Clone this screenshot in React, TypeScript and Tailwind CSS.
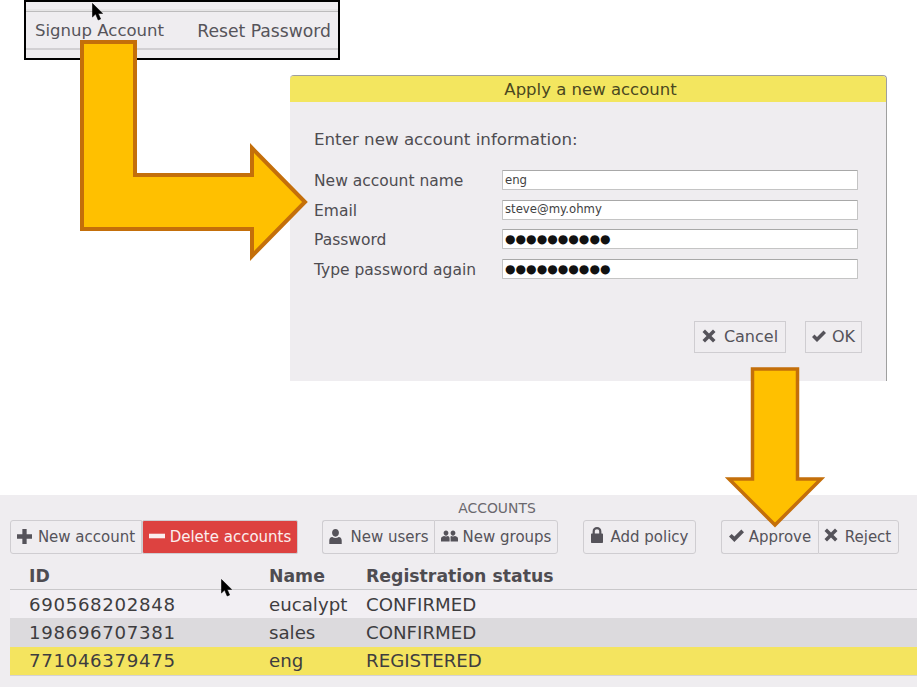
import type { ReactNode } from "react";

const font = "font-['DejaVu_Sans',sans-serif]";

function Cursor({ className }: { className: string }) {
  return (
    <svg viewBox="0 0 12 20" className={`absolute h-[20px] w-[12px] ${className}`}>
      <path d="M0.5 0.5 L0.5 14 L3.6 11 L6.2 17 L8.6 16 L6.2 10.4 L10.6 10.4 Z" fill="#000" stroke="#000" strokeWidth="0.6" />
    </svg>
  );
}

function Icon({ d, className, box = "0 0 14 14" }: { d: string; className: string; box?: string }) {
  return (
    <svg viewBox={box} className={`shrink-0 fill-current ${className}`}>
      <path d={d} />
    </svg>
  );
}

const plus = "M5 0h4v5h5v4H9v5H5V9H0V5h5z";
const minus = "M0 5h14v4H0z";
const cross = "M3 .5 7 4.5 11 .5 13.5 3 9.5 7 13.5 11 11 13.5 7 9.5 3 13.5 .5 11 4.5 7 .5 3z";
const check = "M5 13 0 8 2.5 5.5 5 8 11.5 1.5 14 4z";
const user = "M7 0C8.9 0 10.2 1.6 10.2 3.6S8.9 7.2 7 7.2 3.8 5.6 3.8 3.6 5.1 0 7 0zM4 7.4C5 8 6 8.3 7 8.3S9 8 10 7.4C11.8 7.6 12.8 8.8 12.8 10.8V14H1.2V10.8C1.2 8.8 2.2 7.6 4 7.4z";
const users = "M5 0C6.4 0 7.4 1.1 7.4 2.6S6.4 5.2 5 5.2 2.6 4.1 2.6 2.6 3.6 0 5 0zM12 0C13.4 0 14.4 1.1 14.4 2.6S13.4 5.2 12 5.2 9.6 4.1 9.6 2.6 10.6 0 12 0zM3 5.6C4.2 6.2 5.8 6.2 7 5.6 8.2 6 8.6 7 8.6 8.2V11H0V8.2C0 7 1 6 3 5.6zM10 5.6C11.2 6.2 12.8 6.2 14 5.6 16 6 17 7 17 8.2V11H9.6V8.2C9.6 7 9.2 6 10 5.6z";
const lock = "M6 0C8.6 0 10.4 1.8 10.4 4.4V6.6H11C11.6 6.6 12 7 12 7.6V15C12 15.6 11.6 16 11 16H1C.4 16 0 15.6 0 15V7.6C0 7 .4 6.6 1 6.6H1.6V4.4C1.6 1.8 3.4 0 6 0zM6 2.2C4.6 2.2 3.8 3 3.8 4.4V6.6H8.2V4.4C8.2 3 7.4 2.2 6 2.2z";

function ToolButton({ icon, label, className = "" }: { icon: ReactNode; label: string; className?: string }) {
  return (
    <div className={`flex items-center justify-center border border-[#cfcdd1] text-[#55535a] ${className}`}>
      {icon}
      <span>{label}</span>
    </div>
  );
}

function Field({ label, value, dots }: { label: string; value?: string; dots?: boolean }) {
  return (
    <>
      <div className="h-[20px] text-[15.5px] leading-[22px] text-[#4e4c51]">{label}</div>
      <div className="flex h-[20px] items-center rounded-[1px] border border-[#c4c4c4] border-t-[#a8a8a8] bg-white pl-[2px] pt-[1px] text-[11.7px] text-[#3f3f42]">
        {dots ? <span className="text-[12.1px] leading-none text-[#111]">●●●●●●●●●●</span> : value}
      </div>
    </>
  );
}

const rows = [
  { id: "690568202848", name: "eucalypt", status: "CONFIRMED", bg: "bg-[#f2eff3]" },
  { id: "198696707381", name: "sales", status: "CONFIRMED", bg: "bg-[#dcdadd]" },
  { id: "771046379475", name: "eng", status: "REGISTERED", bg: "bg-[#f4e45f]" },
];

export default function App() {
  return (
    <div className={`relative h-[687px] w-[917px] overflow-hidden bg-white ${font}`}>
      {/* signup menu crop */}
      <div className="ml-[24px] mt-0 flex h-[60px] w-[316px] flex-col border-2 border-black bg-[#efedf0]">
        <div className="mt-[7px] h-[3px] border-b border-[#bdbcbd] bg-[#e6e5e6]" />
        <div className="flex h-[36px] items-center justify-between pl-[9px] pr-[7px] pt-[3px] text-[#56545a]">
          <span className="text-[16.55px]">Signup Account</span>
          <span className="text-[17.2px]">Reset Password</span>
        </div>
        <div className="h-[2px] bg-[#d2d0d3]" />
      </div>

      {/* dialog */}
      <div className="ml-[290px] mt-[15px] h-[306px] w-[597px] rounded-t-[4px] border-r border-t border-[#9f9f9f] bg-[#efedf0]">
        <div className="flex h-[26px] items-center justify-center rounded-t-[4px] bg-[#f3e65f] pl-[5px] pt-[2px] text-[16.5px] text-[#4a4820]">
          Apply a new account
        </div>
        <div className="pl-[24px] pt-[27px] text-[16.7px] leading-[20px] text-[#4e4c51]">Enter new account information:</div>
        <div className="ml-[24px] mt-[21px] grid w-[544px] grid-cols-[188px_356px] gap-y-[9.5px]">
          <Field label="New account name" value="eng" />
          <Field label="Email" value="steve@my.ohmy" />
          <Field label="Password" dots />
          <Field label="Type password again" dots />
        </div>
        <div className="ml-[404px] mt-[42px] flex gap-[19px] text-[16px]">
          <ToolButton className="h-[32px] w-[92px] gap-[8px]" icon={<Icon d={cross} className="-mt-[2px] size-[14px]" />} label="Cancel" />
          <ToolButton className="h-[32px] w-[57px] gap-[6px]" icon={<Icon d={check} className="-mt-[2px] size-[14px]" />} label="OK" />
        </div>
      </div>

      {/* accounts panel */}
      <div className="mt-[114px] h-[192px] bg-[#efedf0]">
        <div className="pl-[77px] pt-[6px] text-center text-[13.9px] leading-[15px] text-[#6a686d]">ACCOUNTS</div>
        <div className="ml-[10px] mt-[4px] flex text-[15px]">
          <div className="flex h-[34px]">
            <ToolButton className="w-[132px] gap-[6px] rounded-l-[3px]" icon={<Icon d={plus} className="-mt-[2px] size-[15px]" />} label="New account" />
            <ToolButton className="w-[156px] gap-[5px] rounded-[2px] border-[#c9302c] bg-[#dd4240] text-[#fbeeee]" icon={<Icon d={minus} className="-mt-[2px] size-[16px]" />} label="Delete accounts" />
          </div>
          <div className="ml-[24px] flex h-[34px]">
            <ToolButton className="w-[112px] gap-[7px] rounded-l-[3px] border-r-0" icon={<Icon d={user} className="-mt-[2px] size-[15px]" />} label="New users" />
            <ToolButton className="w-[124px] gap-[5px] rounded-r-[3px]" icon={<Icon d={users} box="0 0 17 11" className="-mt-[3px] h-[12px] w-[17px]" />} label="New groups" />
          </div>
          <ToolButton className="ml-[25px] h-[34px] w-[113px] gap-[8px] rounded-[3px]" icon={<Icon d={lock} box="0 0 12 16" className="-mt-[4px] h-[16px] w-[12px]" />} label="Add policy" />
          <div className="ml-[25px] flex h-[34px]">
            <ToolButton className="w-[97px] gap-[5px] rounded-l-[3px] border-r-0" icon={<Icon d={check} className="-mt-[4px] size-[15px]" />} label="Approve" />
            <ToolButton className="w-[81px] gap-[7px] rounded-r-[3px] pr-[2px]" icon={<Icon d={cross} className="-mt-[4px] size-[14px]" />} label="Reject" />
          </div>
        </div>
        <div className="ml-[10px] mt-[6px]">
          <div className="grid h-[30px] grid-cols-[240px_97px_1fr] items-center border-b border-[#c9c8ca] pl-[19px] pt-[4px] text-[17.3px] font-bold text-[#4e4c51]">
            <span>ID</span>
            <span>Name</span>
            <span>Registration status</span>
          </div>
          {rows.map((r) => (
            <div key={r.id} className={`grid h-[28.3px] grid-cols-[240px_97px_1fr] items-center pl-[19px] text-[18.2px] text-[#3e3d3f] ${r.bg}`}>
              <span className="tracking-[0.65px]">{r.id}</span>
              <span>{r.name}</span>
              <span>{r.status}</span>
            </div>
          ))}
          <div className="h-[1px] bg-[#d4d2d5]" />
        </div>
      </div>

      {/* callout arrows lie over the screens */}
      <svg viewBox="0 0 917 687" className="pointer-events-none absolute left-0 top-0 h-[687px] w-[917px]">
        <polygon points="82,42 135,42 135,175 252,175 252,148 305,202 252,256 252,229 82,229" fill="#ffc000" stroke="#c46f0a" strokeWidth="4" />
        <polygon points="752.5,369 797.5,369 797.5,479 821,479 775,525 729,479 752.5,479" fill="#ffc000" stroke="#c46f0a" strokeWidth="3.5" />
      </svg>
      <Cursor className="left-[92px] top-[3px]" />
      <Cursor className="left-[221px] top-[579px]" />
    </div>
  );
}
